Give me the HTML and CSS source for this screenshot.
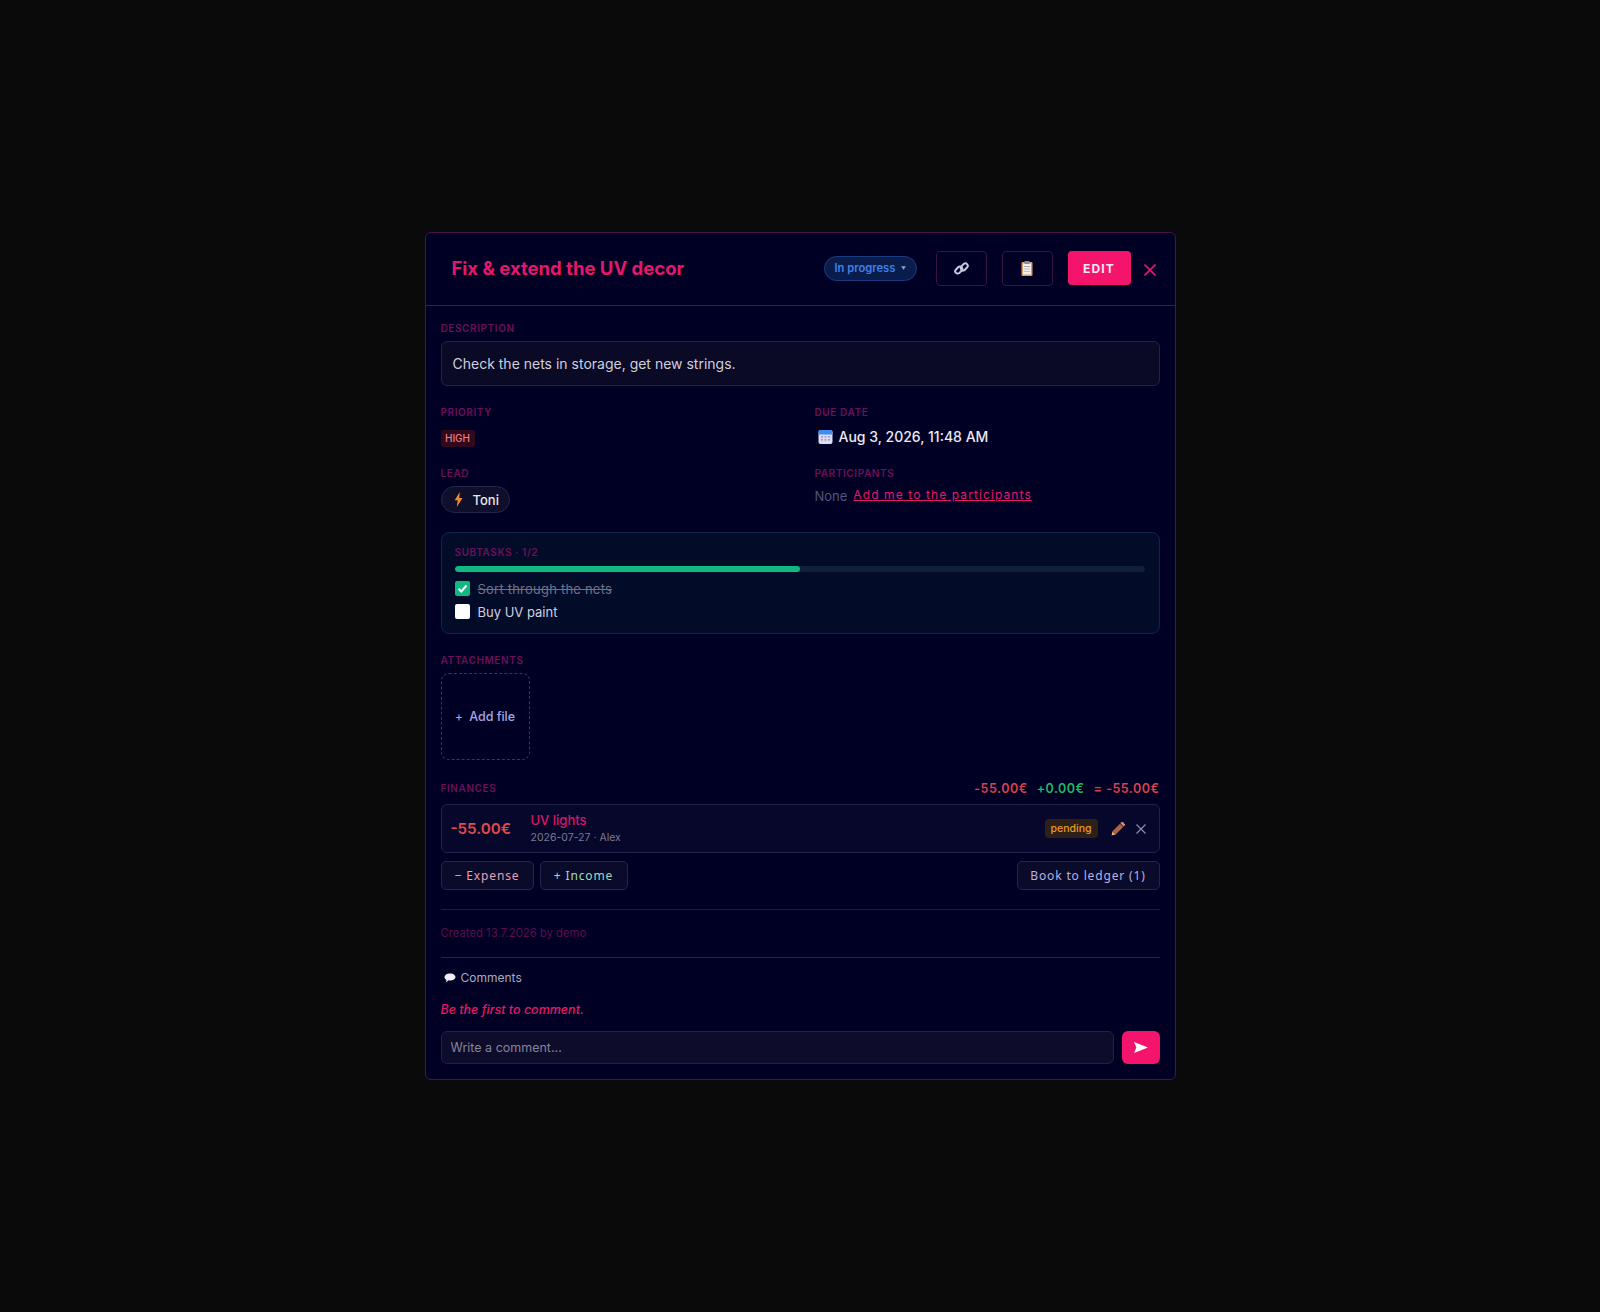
FILE: index.html
```html
<!DOCTYPE html>
<html lang="en">
<head>
<meta charset="utf-8">
<title>Fix &amp; extend the UV decor</title>
<link rel="stylesheet" href="styles.css">
</head>
<body>
<div class="modal">
  <header class="head">
    <h1 class="title">Fix &amp; extend the UV decor</h1>
    <div class="status"><span>In progress</span><svg class="caret" viewBox="0 0 6 4" width="5" height="4"><path d="M0 0h6L3 4z"/></svg></div>
    <button class="icon-btn link-btn"><svg viewBox="0 0 16 16" width="15" height="15"><g fill="none" stroke="#c9c9e4" stroke-width="2.1"><rect x="0.9" y="7.1" width="8.4" height="5.2" rx="2.6" transform="rotate(-45 5.1 9.7)"/><rect x="6.7" y="3.7" width="8.4" height="5.2" rx="2.6" transform="rotate(-45 10.9 6.3)"/></g></svg></button>
    <button class="icon-btn clip-btn"><svg viewBox="0 0 12 15" width="12" height="15"><rect x="0.5" y="1" width="11" height="14" rx="1" fill="#d9976a"/><rect x="2" y="2.5" width="8" height="11" fill="#f3f0ea"/><rect x="3" y="5" width="6" height="1" fill="#a9a9b4"/><rect x="3" y="7.5" width="6" height="1" fill="#b9b9c4"/><rect x="3" y="10" width="6" height="1" fill="#c9c0b4"/><rect x="3.5" y="0" width="5" height="3" rx=".6" fill="#8b8b98"/></svg></button>
    <button class="edit-btn">EDIT</button>
    <button class="close-btn"><svg viewBox="0 0 12 12" width="12" height="12"><path d="M.5.5l11 11M11.5.5l-11 11" stroke="#e6176b" stroke-width="1.6" fill="none"/></svg></button>
  </header>
  <main class="body">
    <section class="desc-sec">
      <div class="label">DESCRIPTION</div>
      <div class="desc">Check the nets in storage, get new strings.</div>
    </section>
    <section class="meta">
      <div class="meta-col pri">
        <div class="label">PRIORITY</div>
        <span class="badge-high">HIGH</span>
      </div>
      <div class="meta-col pri">
        <div class="label">DUE DATE</div>
        <div class="due"><svg viewBox="0 0 15 15" width="15" height="15"><rect x=".5" y="1" width="14" height="14" rx="2" fill="#dcdcf4"/><path d="M.5 3a2 2 0 0 1 2-2h10a2 2 0 0 1 2 2v2.5H.5z" fill="#3f8df0"/><g fill="#a09ccf"><rect x="3" y="7" width="2" height="1.6"/><rect x="6.500" y="7" width="2" height="1.6"/><rect x="10" y="7" width="2" height="1.6"/><rect x="3" y="10" width="2" height="1.6"/><rect x="6.500" y="10" width="2" height="1.6"/><rect x="10" y="10" width="2" height="1.6"/></g></svg><span>Aug 3, 2026, 11:48 AM</span></div>
      </div>
      <div class="meta-col row2">
        <div class="label">LEAD</div>
        <span class="pill"><svg viewBox="0 0 9 15" width="9" height="15"><path d="M5.800 0L.7 8.300h3L2.800 15 8.500 6H5.200z" fill="#f28a2e"/></svg><span>Toni</span></span>
      </div>
      <div class="meta-col row2">
        <div class="label">PARTICIPANTS</div>
        <div class="parts"><span class="none">None</span><a class="add-me">Add me to the participants</a></div>
      </div>
    </section>
    <section class="subtasks">
      <div class="label sub-label">SUBTASKS · 1/2</div>
      <div class="bar"><div class="fill" style="width:50%"></div></div>
      <div class="task">
        <span class="box done"><svg viewBox="0 0 15 15" width="15" height="15"><path d="M3.500 7.700l2.800 2.800 5.200-6" fill="none" stroke="#fff" stroke-width="2"/></svg></span>
        <span class="task-done">Sort through the nets</span>
      </div>
      <div class="task">
        <span class="box"></span>
        <span class="task-open">Buy UV paint</span>
      </div>
    </section>
    <section class="attach">
      <div class="label">ATTACHMENTS</div>
      <div class="drop"><span class="plus">+</span><span>Add file</span></div>
    </section>
    <section class="fin">
      <div class="fin-head">
        <div class="label">FINANCES</div>
        <div class="totals"><span class="red">-55.00€</span><span class="green">+0.00€</span><span class="red">= -55.00€</span></div>
      </div>
      <div class="fin-row">
        <div class="amount">-55.00€</div>
        <div class="fin-text">
          <div class="fin-name">UV lights</div>
          <div class="fin-sub">2026-07-27 · Alex</div>
        </div>
        <span class="pending">pending</span>
        <svg class="pencil" viewBox="0 0 14 14" width="14" height="14"><path d="M.5 13.500l1-4.200 3.200 3.200z" fill="#e0b080"/><path d="M1.500 9.300L9 1.800l3.200 3.200-7.500 7.500z" fill="#b0653a"/><path d="M9.500 1.300l1-1a1 1 0 0 1 1.400 0l1.800 1.800a1 1 0 0 1 0 1.400l-1 1z" fill="#d98a96"/></svg>
        <svg class="mini-x" viewBox="0 0 10 10" width="10" height="10"><path d="M.5.5l9 9M9.500.5l-9 9" stroke="#8e8ea6" stroke-width="1.200" fill="none"/></svg>
      </div>
      <div class="fin-actions">
        <button class="ghost exp">− Expense</button>
        <button class="ghost inc">+ Income</button>
        <button class="ghost book">Book to ledger (1)</button>
      </div>
    </section>
    <div class="created">Created 13.7.2026 by demo</div>
    <section class="comments">
      <div class="com-head"><svg viewBox="0 0 13 11" width="12" height="10"><path d="M6.500.5c3.300 0 6 1.700 6 3.900s-2.700 3.900-6 3.900c-.7 0-1.300 0-1.900-.2C3.800 9.400 2.500 10.300 1.500 10.500c.7-.7 1.100-1.700 1.100-2.800C1.300 7 .5 5.800.5 4.400.5 2.200 3.200.5 6.500.5z" fill="#f0ecfa"/></svg><span>Comments</span></div>
      <div class="first">Be the first to comment.</div>
      <div class="com-form">
        <input class="com-input" placeholder="Write a comment...">
        <button class="send"><svg viewBox="0 0 14 11" width="14" height="11"><path d="M0 0l14 5.500L0 11l2.400-5.500z" fill="#fff"/></svg></button>
      </div>
    </section>
  </main>
</div>
</body>
</html>
```
FILE: styles.css
```css
* { box-sizing: border-box; }
html, body { height: 100%; }
body {
  margin: 0;
  background: #0a0a0a;
  display: flex;
  align-items: center;
  justify-content: center;
  font-family: "Inter", "Liberation Sans", sans-serif;
  color: #e6e6f0;
}
.modal {
  width: 751px;
  background: #000024;
  border: 1px solid #47144e;
  border-radius: 6px;
}
.head {
  height: 73px;
  display: flex;
  align-items: center;
  padding: 0 15px 2px 26px;
  border-bottom: 1px solid #4f1250;
}
.title {
  margin: 0;
  flex: 1;
  font-size: 18.500px;
  font-weight: 700;
  color: #e6176b;
}
.status {
  width: 93px;
  height: 25px;
  display: flex;
  align-items: center;
  gap: 6px;
  padding-left: 10px;
  border-radius: 13px;
  background: #0a1c4c;
  border: 1px solid #1c3a80;
  color: #3f80ea;
  font-size: 11.200px;
  font-weight: 600;
  margin-right: 19px;
}
.caret { fill: #7fa2e0; }
.icon-btn {
  width: 51px;
  height: 35px;
  display: flex;
  align-items: center;
  justify-content: center;
  background: transparent;
  border: 1px solid #3a1245;
  border-radius: 4px;
  padding: 0;
}
.link-btn { margin-right: 15px; }
.clip-btn { margin-right: 15px; }
.edit-btn {
  width: 63px;
  height: 34px;
  border: 0;
  border-radius: 4px;
  background: #f5146b;
  color: #fbe9f1;
  font: 700 12px "Inter", sans-serif;
  letter-spacing: 1.2px;
}
.close-btn {
  width: 12px;
  height: 12px;
  padding: 0;
  border: 0;
  background: none;
  margin: 4px 4px 0 13px;
  display: flex;
}
.body { padding: 15px; display: flex; flex-direction: column; }
.label {
  font-size: 10px;
  font-weight: 600;
  letter-spacing: .6px;
  line-height: 14px;
  color: #6e0f58;
}
.desc {
  margin-top: 6px;
  height: 45px;
  display: flex;
  align-items: center;
  padding: 0 11px;
  background: #0a0a26;
  border: 1px solid #22224a;
  border-radius: 6px;
  font-size: 14px;
  color: #cfcfdc;
}
.meta {
  margin-top: 19px;
  display: grid;
  grid-template-columns: 344px 345px;
  column-gap: 30px;
}
.meta-col { height: 61px; }
.meta-col.row2 { height: 66px; }
.badge-high {
  display: inline-block;
  margin-top: 11px;
  width: 34px;
  height: 17px;
  line-height: 17px;
  text-align: center;
  background: #32081f;
  border-radius: 3px;
  color: #ee7f7f;
  font-size: 10px;
  font-weight: 500;
}
.due {
  margin-top: 9px;
  display: flex;
  align-items: center;
  gap: 6px;
  padding-left: 3px;
  font-size: 14px;
  font-weight: 500;
  color: #e9e9f4;
}
.pill {
  margin-top: 6px;
  width: 69px;
  height: 27px;
  display: inline-flex;
  align-items: center;
  gap: 10px;
  padding-left: 12px;
  background: #0f0f2c;
  border: 1px solid #26264a;
  border-radius: 14px;
  font-size: 13px;
  font-weight: 500;
}
.parts {
  margin-top: 7px;
  display: flex;
  align-items: flex-start;
  gap: 6px;
}
.none { font-size: 13px; color: #55557a; padding-top: 1px; }
.add-me {
  font-size: 12px;
  letter-spacing: 1.100px;
  color: #e6176b;
  text-decoration: underline;
}
.subtasks {
  height: 102px;
  padding: 12px 14px 12px 13px;
  background: #020c28;
  border: 1px solid #102645;
  border-radius: 8px;
}
.bar {
  margin-top: 7px;
  height: 6px;
  border-radius: 3px;
  background: #121f3a;
  overflow: hidden;
}
.fill { height: 100%; background: #10b981; border-radius: 3px; }
.task {
  display: flex;
  align-items: center;
  gap: 8px;
  height: 23px;
  font-size: 13px;
}
.bar + .task { margin-top: 5px; }
.box {
  width: 15px;
  height: 15px;
  border-radius: 2px;
  background: #fff;
  display: flex;
}
.box.done { background: #10b981; }
.task-done { color: #6f6f88; text-decoration: line-through; letter-spacing: .22px; }
.task-open { color: #cfcfe2; }
.attach { margin-top: 19px; }
.drop {
  margin-top: 6px;
  width: 89px;
  height: 87px;
  display: flex;
  align-items: center;
  justify-content: center;
  gap: 6px;
  border: 1px dashed #39355f;
  border-radius: 8px;
  color: #a9a5e2;
  font-size: 12.500px;
  font-weight: 500;
}
.plus { font-weight: 400; }
.fin { margin-top: 20px; }
.fin-head {
  display: flex;
  justify-content: space-between;
  align-items: center;
}
.totals {
  display: flex;
  gap: 9px;
  padding-top: 1px;
  font-size: 12.500px;
  font-weight: 600;
  letter-spacing: .5px;
}
.red { color: #d9414e; }
.green { color: #22b565; }
.fin-row {
  margin-top: 8px;
  height: 49px;
  display: flex;
  align-items: center;
  padding: 0 13px 0 9px;
  background: #06072a;
  border: 1px solid #21234d;
  border-radius: 6px;
}
.amount {
  width: 80px;
  font-size: 15.200px;
  font-weight: 600;
  color: #e14a4a;
}
.fin-text { flex: 1; }
.fin-name { font-size: 13px; font-weight: 500; color: #d9156a; line-height: 19px; }
.fin-sub { font-size: 10.500px; color: #7a7a96; line-height: 16px; }
.pending {
  width: 53px;
  height: 19px;
  line-height: 19px;
  text-align: center;
  background: #2d2018;
  border-radius: 4px;
  color: #e89a24;
  font-size: 10.500px;
  font-weight: 500;
}
.pencil { margin-left: 13px; }
.mini-x { margin-left: 11px; }
.fin-actions {
  margin-top: 8px;
  display: flex;
  gap: 6px;
}
.ghost {
  height: 29px;
  padding: 0;
  background: #0a0b2b;
  border: 1px solid #23254d;
  border-radius: 5px;
  font: 400 12px "Noto Sans", sans-serif;
  letter-spacing: .85px;
}
.exp { color: #e8a0ae; width: 93px; }
.inc { color: #9fdcb7; width: 88px; }
.book { margin-left: auto; color: #b5b2e6; width: 143px; }
.created {
  margin-top: 19px;
  padding-top: 16px;
  border-top: 1px solid #1c1c42;
  height: 48px;
  font-size: 11.300px;
  color: #5e0d4c;
}
.comments { border-top: 1px solid #43103f; padding-top: 11px; }
.com-head {
  display: flex;
  align-items: center;
  gap: 5px;
  padding-left: 3px;
  font-size: 12px;
  color: #aaaabc;
  line-height: 18px;
}
.first {
  margin-top: 14px;
  font-size: 12.500px;
  font-weight: 500;
  font-style: italic;
  color: #e6176b;
  line-height: 18px;
}
.com-form { margin-top: 12px; display: flex; gap: 8px; }
.com-input {
  flex: 1;
  height: 33px;
  padding: 0 9px;
  background: #0d0c2a;
  border: 1px solid #3b1346;
  border-radius: 6px;
  font: 400 12.500px "Inter", sans-serif;
  color: #fff;
}
.com-input::placeholder { color: #84849c; opacity: 1; }
.send {
  width: 38px;
  height: 33px;
  border: 0;
  border-radius: 6px;
  background: #f5146b;
  display: flex;
  align-items: center;
  justify-content: center;
  padding: 0;
}
```
